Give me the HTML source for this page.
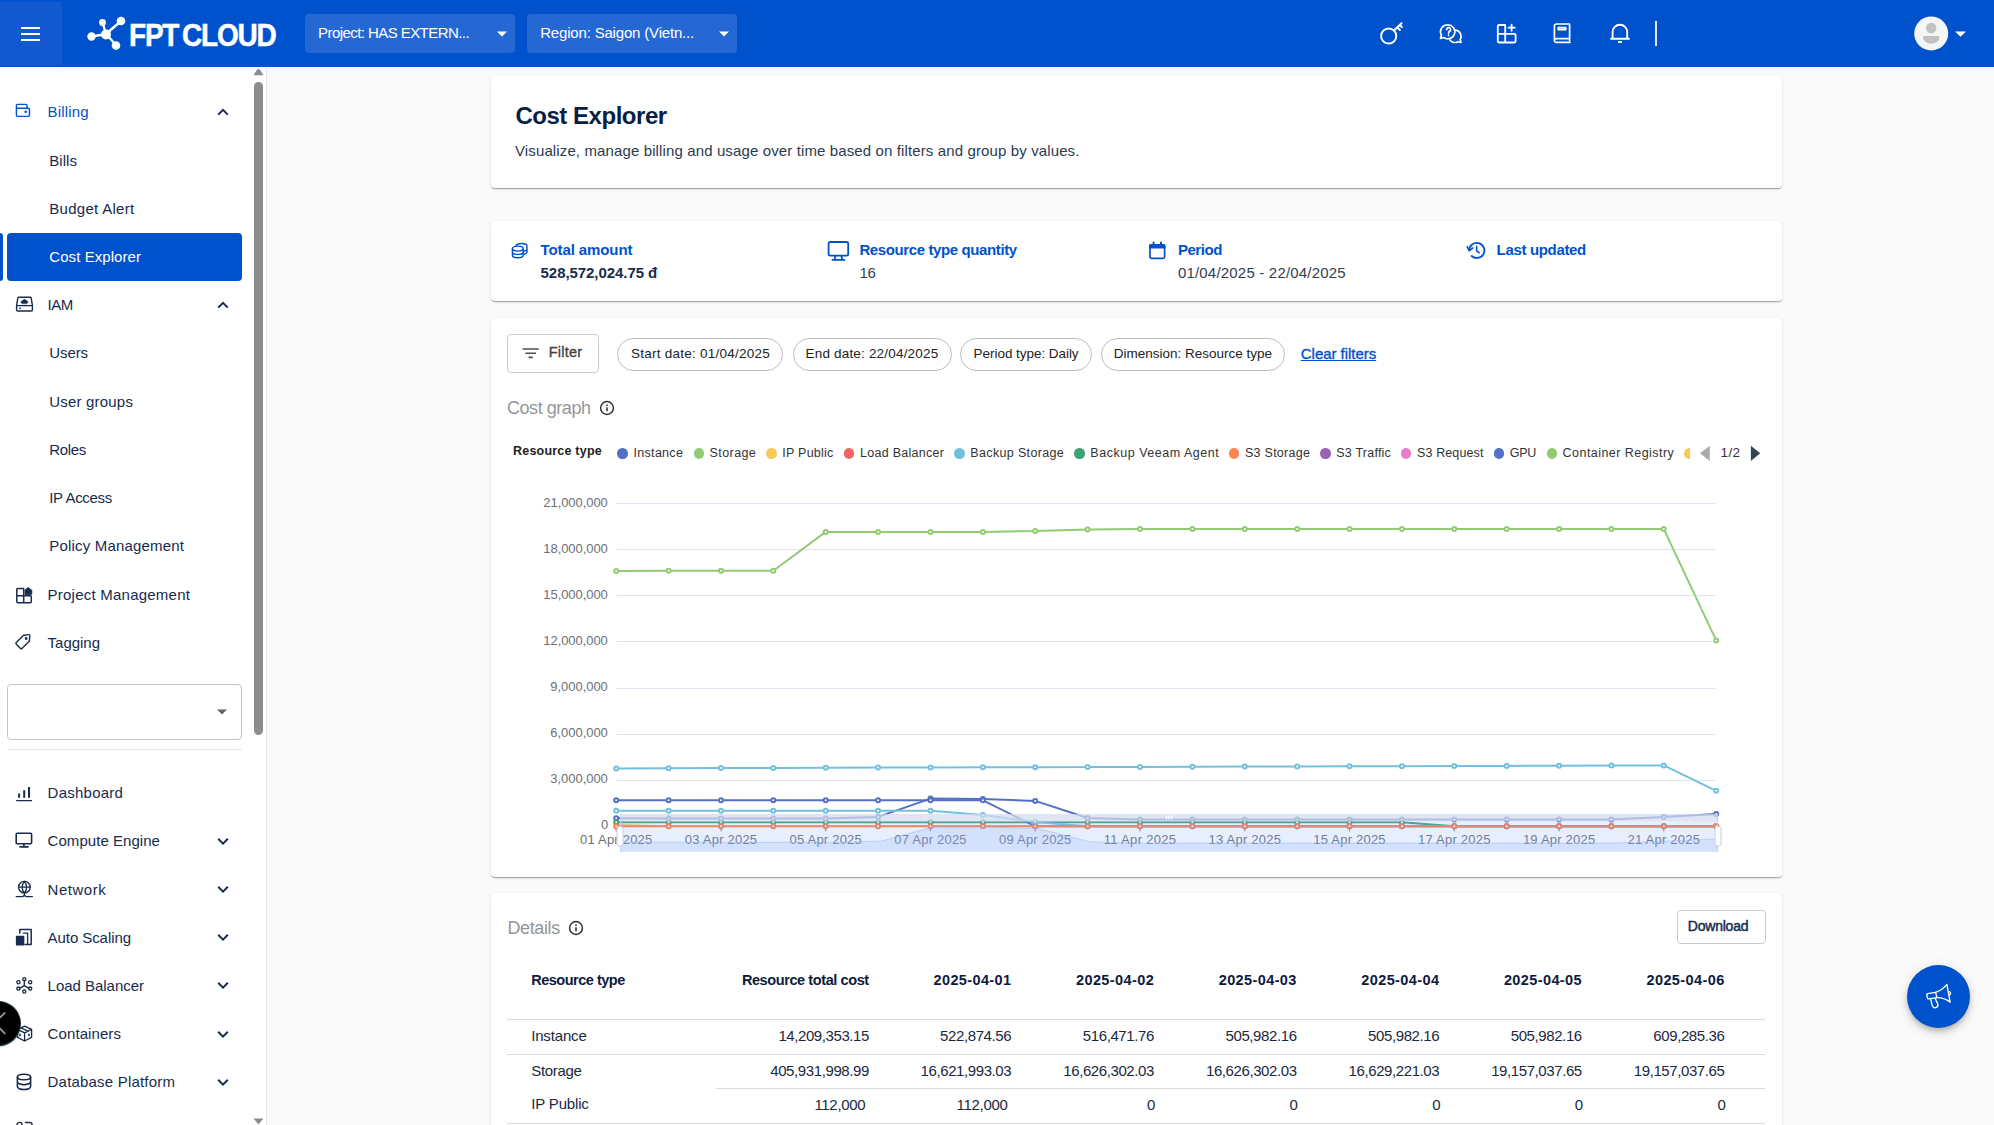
<!DOCTYPE html>
<html lang="en"><head><meta charset="utf-8"><title>Cost Explorer - FPT Cloud</title>
<style>
*{box-sizing:border-box;margin:0;padding:0}
html,body{width:1994px;height:1125px;overflow:hidden;background:#fafafa}
body{position:relative;font-family:"Liberation Sans",sans-serif}
.hdr{position:absolute;left:0;top:0;width:1994px;height:67px;background:#0052cc}
.t{position:absolute;white-space:nowrap;line-height:1;}
svg{overflow:visible}
</style></head>
<body>
<div style="position:absolute;left:491px;top:76px;width:1291px;height:112px;background:#fff;border-radius:4px;box-shadow:0 2px 1px -1px rgba(0,0,0,.2),0 1px 1px 0 rgba(0,0,0,.14),0 1px 3px 0 rgba(0,0,0,.12);"></div>
<span id="t0" class="t" style="left:515.4px;top:104px;font-size:24px;color:#091e42;font-weight:700;letter-spacing:-0.470px;">Cost Explorer</span>
<span id="t1" class="t" style="left:515.0px;top:143px;font-size:15px;color:#2c3a52;letter-spacing:0.124px;">Visualize, manage billing and usage over time based on filters and group by values.</span>
<div style="position:absolute;left:491px;top:221px;width:1291px;height:80px;background:#fff;border-radius:4px;box-shadow:0 2px 1px -1px rgba(0,0,0,.2),0 1px 1px 0 rgba(0,0,0,.14),0 1px 3px 0 rgba(0,0,0,.12);"></div>
<span id="t2" class="t" style="left:540.6px;top:242px;font-size:15px;color:#0052cc;font-weight:700;letter-spacing:-0.108px;">Total amount</span>
<span id="t3" class="t" style="left:540.6px;top:265px;font-size:15px;color:#172b4d;font-weight:700;letter-spacing:-0.065px;">528,572,024.75 đ</span>
<span id="t4" class="t" style="left:859.4px;top:242px;font-size:15px;color:#0052cc;font-weight:700;letter-spacing:-0.385px;">Resource type quantity</span>
<span id="t5" class="t" style="left:859.4px;top:265px;font-size:15px;color:#333d4f;letter-spacing:-0.192px;">16</span>
<span id="t6" class="t" style="left:1177.9px;top:242px;font-size:15px;color:#0052cc;font-weight:700;letter-spacing:-0.452px;">Period</span>
<span id="t7" class="t" style="left:1177.9px;top:265px;font-size:15px;color:#333d4f;letter-spacing:0.196px;">01/04/2025 - 22/04/2025</span>
<span id="t8" class="t" style="left:1496.6px;top:242px;font-size:15px;color:#0052cc;font-weight:700;letter-spacing:-0.334px;">Last updated</span>
<svg style="position:absolute;left:510px;top:241px" width="20" height="19" viewBox="0 0 20 19" fill="none" stroke="#0052cc" stroke-width="1.4" stroke-linecap="round" stroke-linejoin="round"><ellipse cx="7.8" cy="7.6" rx="5.4" ry="2.5"/><path d="M2.4 7.6v6.6c0 1.4 2.4 2.5 5.4 2.5s5.4-1.1 5.4-2.5V7.6M2.4 10.9c0 1.4 2.4 2.5 5.4 2.5s5.4-1.1 5.4-2.5M6 4.6c0.4-1.2 2.6-2.1 5.6-2.1 3 0 5.4 1.1 5.4 2.5v6c0 1-1.4 1.9-3.4 2.3M17 8c0 1-1.4 1.9-3.4 2.3"/></svg>
<svg style="position:absolute;left:826px;top:239px" width="25" height="24" viewBox="0 0 25 24" fill="none" stroke="#0052cc" stroke-width="1.8" stroke-linecap="round" stroke-linejoin="round"><rect x="2.6" y="3" width="19.6" height="13.6" rx="1.6"/><path d="M9.4 16.8l-0.8 3.6M15.4 16.8l0.8 3.6M6.4 20.8h12"/></svg>
<svg style="position:absolute;left:1147px;top:240px" width="21" height="21" viewBox="0 0 21 21" fill="none" stroke="#0052cc" stroke-width="1.7" stroke-linecap="round" stroke-linejoin="round"><rect x="3" y="4.8" width="14.6" height="13.6" rx="1.6"/><path d="M3 5.2h14.6v2.4H3z" fill="#0052cc"/><path d="M6.6 2.4v3M14 2.4v3" stroke-width="2"/></svg>
<svg style="position:absolute;left:1465px;top:239px" width="23" height="23" viewBox="0 0 23 23" fill="none" stroke="#0052cc" stroke-width="1.8" stroke-linecap="round" stroke-linejoin="round"><path d="M4.2 11.4a7.6 7.6 0 1 1 2.4 5.6"/><path d="M2.2 7.6l2 4 3.6-2.6" stroke-width="1.6"/><path d="M11.6 7.4v4.2l2.6 2.2" stroke-width="1.6"/></svg>
<div style="position:absolute;left:491px;top:318px;width:1291px;height:559px;background:#fff;border-radius:4px;box-shadow:0 2px 1px -1px rgba(0,0,0,.2),0 1px 1px 0 rgba(0,0,0,.14),0 1px 3px 0 rgba(0,0,0,.12);"></div>
<div style="position:absolute;left:507px;top:334px;width:91.5px;height:39px;border:1px solid #cbcbcb;border-radius:4px"></div>
<svg style="position:absolute;left:521px;top:346px" width="19" height="14" fill="none" stroke="#505050" stroke-width="1.6"><path d="M1.6 3h16.2M4.3 7.3h10.8M7.6 11.4h4.2"/></svg>
<span id="t9" class="t" style="left:548.8px;top:345px;font-size:14.5px;color:#444;letter-spacing:0.212px;-webkit-text-stroke:0.35px #444;">Filter</span>
<div style="position:absolute;left:617px;top:337.5px;width:166px;height:33px;border:1px solid #bdbdbd;border-radius:17px"></div>
<span id="t10" class="t" style="left:631.0px;top:347px;font-size:13.5px;color:#222;letter-spacing:0.246px;">Start date: 01/04/2025</span>
<div style="position:absolute;left:792.5px;top:337.5px;width:159.29999999999995px;height:33px;border:1px solid #bdbdbd;border-radius:17px"></div>
<span id="t11" class="t" style="left:805.5px;top:347px;font-size:13.5px;color:#222;letter-spacing:0.188px;">End date: 22/04/2025</span>
<div style="position:absolute;left:960px;top:337.5px;width:132px;height:33px;border:1px solid #bdbdbd;border-radius:17px"></div>
<span id="t12" class="t" style="left:973.6px;top:347px;font-size:13.5px;color:#222;letter-spacing:-0.046px;">Period type: Daily</span>
<div style="position:absolute;left:1100.5px;top:337.5px;width:184.5px;height:33px;border:1px solid #bdbdbd;border-radius:17px"></div>
<span id="t13" class="t" style="left:1113.7px;top:347px;font-size:13.5px;color:#222;letter-spacing:-0.005px;">Dimension: Resource type</span>
<span id="t14" class="t" style="left:1300.8px;top:346px;font-size:15px;color:#0052cc;letter-spacing:-0.037px;text-decoration:underline;-webkit-text-stroke:0.35px #0052cc;">Clear filters</span>
<span id="t15" class="t" style="left:507.0px;top:399px;font-size:18px;color:#969696;letter-spacing:-0.449px;">Cost graph</span>
<svg style="position:absolute;left:598.9px;top:400px" width="16" height="16" viewBox="0 0 16 16" fill="none" stroke="#333" stroke-width="1.5"><circle cx="8" cy="8" r="6.4"/><path d="M8 7.2v4" stroke-width="1.6"/><path d="M8 4.6v1.5" stroke-width="1.6"/></svg>
<span id="t16" class="t" style="left:513.0px;top:445px;font-size:12.5px;color:#222;font-weight:700;letter-spacing:0.211px;">Resource type</span>
<div style="position:absolute;left:617.4px;top:448.3px;width:10.4px;height:10.4px;border-radius:50%;background:#5470c6"></div>
<span id="t17" class="t" style="left:633.6px;top:447px;font-size:12.5px;color:#333;letter-spacing:0.285px;">Instance</span>
<div style="position:absolute;left:693.6px;top:448.3px;width:10.4px;height:10.4px;border-radius:50%;background:#91cc75"></div>
<span id="t18" class="t" style="left:709.6px;top:447px;font-size:12.5px;color:#333;letter-spacing:0.403px;">Storage</span>
<div style="position:absolute;left:766.3px;top:448.3px;width:10.4px;height:10.4px;border-radius:50%;background:#fac858"></div>
<span id="t19" class="t" style="left:782.3px;top:447px;font-size:12.5px;color:#333;letter-spacing:0.246px;">IP Public</span>
<div style="position:absolute;left:843.8px;top:448.3px;width:10.4px;height:10.4px;border-radius:50%;background:#ee6666"></div>
<span id="t20" class="t" style="left:860.0px;top:447px;font-size:12.5px;color:#333;letter-spacing:0.270px;">Load Balancer</span>
<div style="position:absolute;left:954.4px;top:448.3px;width:10.4px;height:10.4px;border-radius:50%;background:#73c0de"></div>
<span id="t21" class="t" style="left:970.3px;top:447px;font-size:12.5px;color:#333;letter-spacing:0.352px;">Backup Storage</span>
<div style="position:absolute;left:1074.4px;top:448.3px;width:10.4px;height:10.4px;border-radius:50%;background:#3ba272"></div>
<span id="t22" class="t" style="left:1090.3px;top:447px;font-size:12.5px;color:#333;letter-spacing:0.524px;">Backup Veeam Agent</span>
<div style="position:absolute;left:1229.1px;top:448.3px;width:10.4px;height:10.4px;border-radius:50%;background:#fc8452"></div>
<span id="t23" class="t" style="left:1245.0px;top:447px;font-size:12.5px;color:#333;letter-spacing:0.258px;">S3 Storage</span>
<div style="position:absolute;left:1320.3px;top:448.3px;width:10.4px;height:10.4px;border-radius:50%;background:#9a60b4"></div>
<span id="t24" class="t" style="left:1336.2px;top:447px;font-size:12.5px;color:#333;letter-spacing:0.234px;">S3 Traffic</span>
<div style="position:absolute;left:1400.8px;top:448.3px;width:10.4px;height:10.4px;border-radius:50%;background:#ea7ccc"></div>
<span id="t25" class="t" style="left:1417.0px;top:447px;font-size:12.5px;color:#333;letter-spacing:0.123px;">S3 Request</span>
<div style="position:absolute;left:1493.8px;top:448.3px;width:10.4px;height:10.4px;border-radius:50%;background:#5470c6"></div>
<span id="t26" class="t" style="left:1509.8px;top:447px;font-size:12.5px;color:#333;letter-spacing:-0.358px;">GPU</span>
<div style="position:absolute;left:1546.8px;top:448.3px;width:10.4px;height:10.4px;border-radius:50%;background:#91cc75"></div>
<span id="t27" class="t" style="left:1562.6px;top:447px;font-size:12.5px;color:#333;letter-spacing:0.451px;">Container Registry</span>
<div style="position:absolute;left:1684px;top:448.2px;width:5.8px;height:10.6px;overflow:hidden"><div style="width:10.6px;height:10.6px;border-radius:50%;background:#fac858"></div></div>
<svg style="position:absolute;left:1698px;top:445px" width="64" height="17"><path d="M11.8 0.8v15.1L2 8.35z" fill="#aaa"/><path d="M52.9 0.8v15.1L62.2 8.35z" fill="#2f4554"/></svg>
<span id="t28" class="t" style="left:1720.6px;top:446px;font-size:13.5px;color:#333;letter-spacing:0.287px;">1/2</span>
<svg style="position:absolute;left:0;top:0" width="1994" height="1125" viewBox="0 0 1994 1125">
<line x1="616.2" x2="1716.2" y1="826.5" y2="826.5" stroke="#e0e6f1" stroke-width="1"/>
<line x1="616.2" x2="1716.2" y1="780.5" y2="780.5" stroke="#e0e6f1" stroke-width="1"/>
<line x1="616.2" x2="1716.2" y1="734.5" y2="734.5" stroke="#e0e6f1" stroke-width="1"/>
<line x1="616.2" x2="1716.2" y1="688.5" y2="688.5" stroke="#e0e6f1" stroke-width="1"/>
<line x1="616.2" x2="1716.2" y1="641.5" y2="641.5" stroke="#e0e6f1" stroke-width="1"/>
<line x1="616.2" x2="1716.2" y1="595.5" y2="595.5" stroke="#e0e6f1" stroke-width="1"/>
<line x1="616.2" x2="1716.2" y1="549.5" y2="549.5" stroke="#e0e6f1" stroke-width="1"/>
<line x1="616.2" x2="1716.2" y1="503.5" y2="503.5" stroke="#e0e6f1" stroke-width="1"/>
<line x1="616.2" x2="616.2" y1="826.3" y2="831.3" stroke="#6e7079" stroke-width="1"/>
<line x1="721.0" x2="721.0" y1="826.3" y2="831.3" stroke="#6e7079" stroke-width="1"/>
<line x1="825.7" x2="825.7" y1="826.3" y2="831.3" stroke="#6e7079" stroke-width="1"/>
<line x1="930.5" x2="930.5" y1="826.3" y2="831.3" stroke="#6e7079" stroke-width="1"/>
<line x1="1035.2" x2="1035.2" y1="826.3" y2="831.3" stroke="#6e7079" stroke-width="1"/>
<line x1="1140.0" x2="1140.0" y1="826.3" y2="831.3" stroke="#6e7079" stroke-width="1"/>
<line x1="1244.8" x2="1244.8" y1="826.3" y2="831.3" stroke="#6e7079" stroke-width="1"/>
<line x1="1349.5" x2="1349.5" y1="826.3" y2="831.3" stroke="#6e7079" stroke-width="1"/>
<line x1="1454.3" x2="1454.3" y1="826.3" y2="831.3" stroke="#6e7079" stroke-width="1"/>
<line x1="1559.1" x2="1559.1" y1="826.3" y2="831.3" stroke="#6e7079" stroke-width="1"/>
<line x1="1663.8" x2="1663.8" y1="826.3" y2="831.3" stroke="#6e7079" stroke-width="1"/>
<polyline points="616.2,818.3 668.6,818.4 721.0,818.5 773.3,818.5 825.7,818.5 878.1,816.9 930.5,798.6 982.9,798.9 1035.2,800.9 1087.6,818.0 1140.0,819.5 1192.4,819.5 1244.8,819.5 1297.2,819.5 1349.5,819.5 1401.9,819.5 1454.3,819.5 1506.7,819.5 1559.1,819.5 1611.4,819.5 1663.8,817.1 1716.2,814.0" fill="none" stroke="#5470c6" stroke-width="2" stroke-linejoin="bevel"/><g fill="#fff" stroke="#5470c6" stroke-width="2"><circle cx="616.2" cy="818.3" r="2"/><circle cx="668.6" cy="818.4" r="2"/><circle cx="721.0" cy="818.5" r="2"/><circle cx="773.3" cy="818.5" r="2"/><circle cx="825.7" cy="818.5" r="2"/><circle cx="878.1" cy="816.9" r="2"/><circle cx="930.5" cy="798.6" r="2"/><circle cx="982.9" cy="798.9" r="2"/><circle cx="1035.2" cy="800.9" r="2"/><circle cx="1087.6" cy="818.0" r="2"/><circle cx="1140.0" cy="819.5" r="2"/><circle cx="1192.4" cy="819.5" r="2"/><circle cx="1244.8" cy="819.5" r="2"/><circle cx="1297.2" cy="819.5" r="2"/><circle cx="1349.5" cy="819.5" r="2"/><circle cx="1401.9" cy="819.5" r="2"/><circle cx="1454.3" cy="819.5" r="2"/><circle cx="1506.7" cy="819.5" r="2"/><circle cx="1559.1" cy="819.5" r="2"/><circle cx="1611.4" cy="819.5" r="2"/><circle cx="1663.8" cy="817.1" r="2"/><circle cx="1716.2" cy="814.0" r="2"/></g>
<polyline points="616.2,570.9 668.6,570.8 721.0,570.8 773.3,570.8 825.7,531.9 878.1,531.9 930.5,531.9 982.9,531.9 1035.2,531.0 1087.6,529.4 1140.0,529.1 1192.4,529.1 1244.8,529.1 1297.2,529.1 1349.5,529.1 1401.9,529.1 1454.3,529.1 1506.7,529.1 1559.1,529.1 1611.4,529.1 1663.8,529.1 1716.2,640.4" fill="none" stroke="#91cc75" stroke-width="2" stroke-linejoin="bevel"/><g fill="#fff" stroke="#91cc75" stroke-width="2"><circle cx="616.2" cy="570.9" r="2"/><circle cx="668.6" cy="570.8" r="2"/><circle cx="721.0" cy="570.8" r="2"/><circle cx="773.3" cy="570.8" r="2"/><circle cx="825.7" cy="531.9" r="2"/><circle cx="878.1" cy="531.9" r="2"/><circle cx="930.5" cy="531.9" r="2"/><circle cx="982.9" cy="531.9" r="2"/><circle cx="1035.2" cy="531.0" r="2"/><circle cx="1087.6" cy="529.4" r="2"/><circle cx="1140.0" cy="529.1" r="2"/><circle cx="1192.4" cy="529.1" r="2"/><circle cx="1244.8" cy="529.1" r="2"/><circle cx="1297.2" cy="529.1" r="2"/><circle cx="1349.5" cy="529.1" r="2"/><circle cx="1401.9" cy="529.1" r="2"/><circle cx="1454.3" cy="529.1" r="2"/><circle cx="1506.7" cy="529.1" r="2"/><circle cx="1559.1" cy="529.1" r="2"/><circle cx="1611.4" cy="529.1" r="2"/><circle cx="1663.8" cy="529.1" r="2"/><circle cx="1716.2" cy="640.4" r="2"/></g>
<polyline points="616.2,824.6 668.6,826.3 721.0,826.3 773.3,826.3 825.7,826.3 878.1,826.3 930.5,826.3 982.9,826.3 1035.2,826.3 1087.6,826.3 1140.0,826.3 1192.4,826.3 1244.8,826.3 1297.2,826.3 1349.5,826.3 1401.9,826.3 1454.3,826.3 1506.7,826.3 1559.1,826.3 1611.4,826.3 1663.8,826.3 1716.2,826.3" fill="none" stroke="#fac858" stroke-width="1.5" stroke-linejoin="bevel"/>
<polyline points="616.2,768.4 668.6,768.2 721.0,768.1 773.3,767.9 825.7,767.8 878.1,767.6 930.5,767.5 982.9,767.3 1035.2,767.2 1087.6,767.1 1140.0,766.9 1192.4,766.8 1244.8,766.6 1297.2,766.5 1349.5,766.3 1401.9,766.2 1454.3,766.0 1506.7,765.9 1559.1,765.7 1611.4,765.6 1663.8,765.4 1716.2,790.8" fill="none" stroke="#73c0de" stroke-width="2" stroke-linejoin="bevel"/><g fill="#fff" stroke="#73c0de" stroke-width="2"><circle cx="616.2" cy="768.4" r="2"/><circle cx="668.6" cy="768.2" r="2"/><circle cx="721.0" cy="768.1" r="2"/><circle cx="773.3" cy="767.9" r="2"/><circle cx="825.7" cy="767.8" r="2"/><circle cx="878.1" cy="767.6" r="2"/><circle cx="930.5" cy="767.5" r="2"/><circle cx="982.9" cy="767.3" r="2"/><circle cx="1035.2" cy="767.2" r="2"/><circle cx="1087.6" cy="767.1" r="2"/><circle cx="1140.0" cy="766.9" r="2"/><circle cx="1192.4" cy="766.8" r="2"/><circle cx="1244.8" cy="766.6" r="2"/><circle cx="1297.2" cy="766.5" r="2"/><circle cx="1349.5" cy="766.3" r="2"/><circle cx="1401.9" cy="766.2" r="2"/><circle cx="1454.3" cy="766.0" r="2"/><circle cx="1506.7" cy="765.9" r="2"/><circle cx="1559.1" cy="765.7" r="2"/><circle cx="1611.4" cy="765.6" r="2"/><circle cx="1663.8" cy="765.4" r="2"/><circle cx="1716.2" cy="790.8" r="2"/></g>
<polyline points="616.2,822.2 668.6,822.2 721.0,822.2 773.3,822.2 825.7,822.2 878.1,822.2 930.5,822.2 982.9,822.2 1035.2,822.2 1087.6,822.2 1140.0,822.2 1192.4,822.2 1244.8,822.2 1297.2,822.2 1349.5,822.2 1401.9,822.2 1454.3,826.3 1506.7,826.3 1559.1,826.3 1611.4,826.3 1663.8,826.3 1716.2,826.3" fill="none" stroke="#3ba272" stroke-width="2" stroke-linejoin="bevel"/><g fill="#fff" stroke="#3ba272" stroke-width="2"><circle cx="616.2" cy="822.2" r="2"/><circle cx="668.6" cy="822.2" r="2"/><circle cx="721.0" cy="822.2" r="2"/><circle cx="773.3" cy="822.2" r="2"/><circle cx="825.7" cy="822.2" r="2"/><circle cx="878.1" cy="822.2" r="2"/><circle cx="930.5" cy="822.2" r="2"/><circle cx="982.9" cy="822.2" r="2"/><circle cx="1035.2" cy="822.2" r="2"/><circle cx="1087.6" cy="822.2" r="2"/><circle cx="1140.0" cy="822.2" r="2"/><circle cx="1192.4" cy="822.2" r="2"/><circle cx="1244.8" cy="822.2" r="2"/><circle cx="1297.2" cy="822.2" r="2"/><circle cx="1349.5" cy="822.2" r="2"/><circle cx="1401.9" cy="822.2" r="2"/><circle cx="1454.3" cy="826.3" r="2"/><circle cx="1506.7" cy="826.3" r="2"/><circle cx="1559.1" cy="826.3" r="2"/><circle cx="1611.4" cy="826.3" r="2"/><circle cx="1663.8" cy="826.3" r="2"/><circle cx="1716.2" cy="826.3" r="2"/></g>
<polyline points="616.2,800.3 668.6,800.3 721.0,800.3 773.3,800.3 825.7,800.3 878.1,800.3 930.5,800.3 982.9,800.3 1035.2,826.3 1087.6,826.3 1140.0,826.3 1192.4,826.3 1244.8,826.3 1297.2,826.3 1349.5,826.3 1401.9,826.3 1454.3,826.3 1506.7,826.3 1559.1,826.3 1611.4,826.3 1663.8,826.3 1716.2,826.3" fill="none" stroke="#5470c6" stroke-width="2" stroke-linejoin="bevel"/><g fill="#fff" stroke="#5470c6" stroke-width="2"><circle cx="616.2" cy="800.3" r="2"/><circle cx="668.6" cy="800.3" r="2"/><circle cx="721.0" cy="800.3" r="2"/><circle cx="773.3" cy="800.3" r="2"/><circle cx="825.7" cy="800.3" r="2"/><circle cx="878.1" cy="800.3" r="2"/><circle cx="930.5" cy="800.3" r="2"/><circle cx="982.9" cy="800.3" r="2"/><circle cx="1035.2" cy="826.3" r="2"/><circle cx="1087.6" cy="826.3" r="2"/><circle cx="1140.0" cy="826.3" r="2"/><circle cx="1192.4" cy="826.3" r="2"/><circle cx="1244.8" cy="826.3" r="2"/><circle cx="1297.2" cy="826.3" r="2"/><circle cx="1349.5" cy="826.3" r="2"/><circle cx="1401.9" cy="826.3" r="2"/><circle cx="1454.3" cy="826.3" r="2"/><circle cx="1506.7" cy="826.3" r="2"/><circle cx="1559.1" cy="826.3" r="2"/><circle cx="1611.4" cy="826.3" r="2"/><circle cx="1663.8" cy="826.3" r="2"/><circle cx="1716.2" cy="826.3" r="2"/></g>
<polyline points="616.2,810.7 668.6,810.7 721.0,810.7 773.3,810.7 825.7,810.7 878.1,810.7 930.5,810.7 982.9,815.0 1035.2,822.0 1087.6,826.3 1140.0,826.3 1192.4,826.3 1244.8,826.3 1297.2,826.3 1349.5,826.3 1401.9,826.3 1454.3,826.3 1506.7,826.3 1559.1,826.3 1611.4,826.3 1663.8,826.3 1716.2,826.3" fill="none" stroke="#73c0de" stroke-width="2" stroke-linejoin="bevel"/><g fill="#fff" stroke="#73c0de" stroke-width="2"><circle cx="616.2" cy="810.7" r="2"/><circle cx="668.6" cy="810.7" r="2"/><circle cx="721.0" cy="810.7" r="2"/><circle cx="773.3" cy="810.7" r="2"/><circle cx="825.7" cy="810.7" r="2"/><circle cx="878.1" cy="810.7" r="2"/><circle cx="930.5" cy="810.7" r="2"/><circle cx="982.9" cy="815.0" r="2"/><circle cx="1035.2" cy="822.0" r="2"/><circle cx="1087.6" cy="826.3" r="2"/><circle cx="1140.0" cy="826.3" r="2"/><circle cx="1192.4" cy="826.3" r="2"/><circle cx="1244.8" cy="826.3" r="2"/><circle cx="1297.2" cy="826.3" r="2"/><circle cx="1349.5" cy="826.3" r="2"/><circle cx="1401.9" cy="826.3" r="2"/><circle cx="1454.3" cy="826.3" r="2"/><circle cx="1506.7" cy="826.3" r="2"/><circle cx="1559.1" cy="826.3" r="2"/><circle cx="1611.4" cy="826.3" r="2"/><circle cx="1663.8" cy="826.3" r="2"/><circle cx="1716.2" cy="826.3" r="2"/></g>
<polyline points="616.2,826.3 668.6,826.3 721.0,826.3 773.3,826.3 825.7,826.3 878.1,826.3 930.5,826.3 982.9,826.3 1035.2,826.3 1087.6,826.3 1140.0,826.3 1192.4,826.3 1244.8,826.3 1297.2,826.3 1349.5,826.3 1401.9,826.3 1454.3,826.3 1506.7,826.3 1559.1,826.3 1611.4,826.3 1663.8,826.3 1716.2,826.3" fill="none" stroke="#fc7c46" stroke-width="2" stroke-linejoin="bevel"/><g fill="#fff" stroke="#fc7c46" stroke-width="2"><circle cx="616.2" cy="826.3" r="2"/><circle cx="668.6" cy="826.3" r="2"/><circle cx="721.0" cy="826.3" r="2"/><circle cx="773.3" cy="826.3" r="2"/><circle cx="825.7" cy="826.3" r="2"/><circle cx="878.1" cy="826.3" r="2"/><circle cx="930.5" cy="826.3" r="2"/><circle cx="982.9" cy="826.3" r="2"/><circle cx="1035.2" cy="826.3" r="2"/><circle cx="1087.6" cy="826.3" r="2"/><circle cx="1140.0" cy="826.3" r="2"/><circle cx="1192.4" cy="826.3" r="2"/><circle cx="1244.8" cy="826.3" r="2"/><circle cx="1297.2" cy="826.3" r="2"/><circle cx="1349.5" cy="826.3" r="2"/><circle cx="1401.9" cy="826.3" r="2"/><circle cx="1454.3" cy="826.3" r="2"/><circle cx="1506.7" cy="826.3" r="2"/><circle cx="1559.1" cy="826.3" r="2"/><circle cx="1611.4" cy="826.3" r="2"/><circle cx="1663.8" cy="826.3" r="2"/><circle cx="1716.2" cy="826.3" r="2"/></g>
</svg>
<span id="t29" class="t" style="left:600.9px;top:818px;font-size:13px;color:#6e7079;">0</span>
<span id="t30" class="t" style="left:550.3px;top:772px;font-size:13px;color:#6e7079;letter-spacing:-0.040px;">3,000,000</span>
<span id="t31" class="t" style="left:550.3px;top:726px;font-size:13px;color:#6e7079;letter-spacing:-0.040px;">6,000,000</span>
<span id="t32" class="t" style="left:550.3px;top:680px;font-size:13px;color:#6e7079;letter-spacing:-0.040px;">9,000,000</span>
<span id="t33" class="t" style="left:543.3px;top:634px;font-size:13px;color:#6e7079;letter-spacing:-0.061px;">12,000,000</span>
<span id="t34" class="t" style="left:543.3px;top:588px;font-size:13px;color:#6e7079;letter-spacing:-0.061px;">15,000,000</span>
<span id="t35" class="t" style="left:543.3px;top:542px;font-size:13px;color:#6e7079;letter-spacing:-0.061px;">18,000,000</span>
<span id="t36" class="t" style="left:543.3px;top:496px;font-size:13px;color:#6e7079;letter-spacing:-0.061px;">21,000,000</span>
<span id="t37" class="t" style="left:580.0px;top:833px;font-size:13px;color:#6e7079;letter-spacing:0.217px;">01 Apr 2025</span>
<span id="t38" class="t" style="left:684.8px;top:833px;font-size:13px;color:#6e7079;letter-spacing:0.217px;">03 Apr 2025</span>
<span id="t39" class="t" style="left:789.5px;top:833px;font-size:13px;color:#6e7079;letter-spacing:0.217px;">05 Apr 2025</span>
<span id="t40" class="t" style="left:894.3px;top:833px;font-size:13px;color:#6e7079;letter-spacing:0.217px;">07 Apr 2025</span>
<span id="t41" class="t" style="left:999.0px;top:833px;font-size:13px;color:#6e7079;letter-spacing:0.217px;">09 Apr 2025</span>
<span id="t42" class="t" style="left:1103.8px;top:833px;font-size:13px;color:#6e7079;letter-spacing:0.309px;">11 Apr 2025</span>
<span id="t43" class="t" style="left:1208.6px;top:833px;font-size:13px;color:#6e7079;letter-spacing:0.217px;">13 Apr 2025</span>
<span id="t44" class="t" style="left:1313.3px;top:833px;font-size:13px;color:#6e7079;letter-spacing:0.217px;">15 Apr 2025</span>
<span id="t45" class="t" style="left:1418.1px;top:833px;font-size:13px;color:#6e7079;letter-spacing:0.217px;">17 Apr 2025</span>
<span id="t46" class="t" style="left:1522.9px;top:833px;font-size:13px;color:#6e7079;letter-spacing:0.217px;">19 Apr 2025</span>
<span id="t47" class="t" style="left:1627.6px;top:833px;font-size:13px;color:#6e7079;letter-spacing:0.217px;">21 Apr 2025</span>
<svg style="position:absolute;left:0;top:0" width="1994" height="1125" viewBox="0 0 1994 1125">
<rect x="620" y="814" width="1098" height="7.5" fill="#d2dbee" fill-opacity="0.72"/>
<rect x="620" y="821.5" width="1098" height="30.3" fill="#87afff" fill-opacity="0.2"/>
<polygon points="620,851.8 620.0,842.1 672.3,842.2 724.6,842.3 776.9,842.3 829.1,842.3 881.4,841.1 933.7,826.8 986.0,827.0 1038.3,828.6 1090.6,841.9 1142.9,843.1 1195.1,843.1 1247.4,843.1 1299.7,843.1 1352.0,843.1 1404.3,843.1 1456.6,843.1 1508.9,843.1 1561.1,843.1 1613.4,843.1 1665.7,841.2 1718.0,838.8 1718,851.8" fill="#8fb0f7" fill-opacity="0.22"/>
<polyline points="620.0,842.1 672.3,842.2 724.6,842.3 776.9,842.3 829.1,842.3 881.4,841.1 933.7,826.8 986.0,827.0 1038.3,828.6 1090.6,841.9 1142.9,843.1 1195.1,843.1 1247.4,843.1 1299.7,843.1 1352.0,843.1 1404.3,843.1 1456.6,843.1 1508.9,843.1 1561.1,843.1 1613.4,843.1 1665.7,841.2 1718.0,838.8" fill="none" stroke="#8fb0f7" stroke-opacity="0.45" stroke-width="1"/>
<path d="M620.5 814v37.8M1717.5 814v37.8" stroke="#c3cfee" stroke-width="1" fill="none"/>
<path d="M1166.5 815.5v4M1169 815.5v4M1171.5 815.5v4" stroke="#fff" stroke-width="1.2"/>
<rect x="617" y="826.5" width="6" height="19.5" rx="2" fill="#fff" stroke="#c3cce0" stroke-width="1"/>
<rect x="1715" y="826.5" width="6" height="19.5" rx="2" fill="#fff" stroke="#c3cce0" stroke-width="1"/>
</svg>
<div style="position:absolute;left:491px;top:893px;width:1291px;height:260px;background:#fff;border-radius:4px;box-shadow:0 2px 1px -1px rgba(0,0,0,.2),0 1px 1px 0 rgba(0,0,0,.14),0 1px 3px 0 rgba(0,0,0,.12);"></div>
<span id="t48" class="t" style="left:507.4px;top:919px;font-size:18px;color:#969696;letter-spacing:-0.374px;">Details</span>
<svg style="position:absolute;left:567.5px;top:920.1px" width="16" height="16" viewBox="0 0 16 16" fill="none" stroke="#333" stroke-width="1.5"><circle cx="8" cy="8" r="6.4"/><path d="M8 7.2v4" stroke-width="1.6"/><path d="M8 4.6v1.5" stroke-width="1.6"/></svg>
<div style="position:absolute;left:1677px;top:910px;width:88.5px;height:33.5px;border:1px solid #cbcbcb;border-radius:4px"></div>
<span id="t49" class="t" style="left:1687.8px;top:919px;font-size:14px;color:#172b4d;letter-spacing:-0.222px;-webkit-text-stroke:0.45px #172b4d;">Download</span>
<span id="t50" class="t" style="left:531.2px;top:973px;font-size:14.5px;color:#0d1b3d;font-weight:700;letter-spacing:-0.491px;">Resource type</span>
<span id="t51" class="t" style="left:741.9px;top:973px;font-size:14.5px;color:#0d1b3d;font-weight:700;letter-spacing:-0.404px;">Resource total cost</span>
<span id="t52" class="t" style="left:933.6px;top:973px;font-size:14.5px;color:#0d1b3d;font-weight:700;letter-spacing:0.361px;">2025-04-01</span>
<span id="t53" class="t" style="left:1076.0px;top:973px;font-size:14.5px;color:#0d1b3d;font-weight:700;letter-spacing:0.392px;">2025-04-02</span>
<span id="t54" class="t" style="left:1218.7px;top:973px;font-size:14.5px;color:#0d1b3d;font-weight:700;letter-spacing:0.392px;">2025-04-03</span>
<span id="t55" class="t" style="left:1361.3px;top:973px;font-size:14.5px;color:#0d1b3d;font-weight:700;letter-spacing:0.392px;">2025-04-04</span>
<span id="t56" class="t" style="left:1503.9px;top:973px;font-size:14.5px;color:#0d1b3d;font-weight:700;letter-spacing:0.392px;">2025-04-05</span>
<span id="t57" class="t" style="left:1646.5px;top:973px;font-size:14.5px;color:#0d1b3d;font-weight:700;letter-spacing:0.392px;">2025-04-06</span>
<div style="position:absolute;left:507px;top:1019px;width:1258px;height:1px;background:#dcdcdc"></div>
<div style="position:absolute;left:507px;top:1054px;width:1258px;height:1px;background:#dcdcdc"></div>
<div style="position:absolute;left:716px;top:1088px;width:1049px;height:1px;background:#dcdcdc"></div>
<div style="position:absolute;left:507px;top:1123px;width:1258px;height:1px;background:#dcdcdc"></div>
<span id="t58" class="t" style="left:531.2px;top:1028px;font-size:15px;color:#1b2840;letter-spacing:-0.163px;">Instance</span>
<span id="t59" class="t" style="left:778.4px;top:1028px;font-size:15px;color:#1b2840;letter-spacing:-0.411px;">14,209,353.15</span>
<span id="t60" class="t" style="left:940.1px;top:1028px;font-size:15px;color:#1b2840;letter-spacing:-0.398px;">522,874.56</span>
<span id="t61" class="t" style="left:1082.8px;top:1028px;font-size:15px;color:#1b2840;letter-spacing:-0.398px;">516,471.76</span>
<span id="t62" class="t" style="left:1225.5px;top:1028px;font-size:15px;color:#1b2840;letter-spacing:-0.398px;">505,982.16</span>
<span id="t63" class="t" style="left:1368.1px;top:1028px;font-size:15px;color:#1b2840;letter-spacing:-0.398px;">505,982.16</span>
<span id="t64" class="t" style="left:1510.7px;top:1028px;font-size:15px;color:#1b2840;letter-spacing:-0.398px;">505,982.16</span>
<span id="t65" class="t" style="left:1653.3px;top:1028px;font-size:15px;color:#1b2840;letter-spacing:-0.398px;">609,285.36</span>
<span id="t66" class="t" style="left:531.2px;top:1063px;font-size:15px;color:#1b2840;letter-spacing:-0.315px;">Storage</span>
<span id="t67" class="t" style="left:770.2px;top:1063px;font-size:15px;color:#1b2840;letter-spacing:-0.391px;">405,931,998.99</span>
<span id="t68" class="t" style="left:920.6px;top:1063px;font-size:15px;color:#1b2840;letter-spacing:-0.411px;">16,621,993.03</span>
<span id="t69" class="t" style="left:1063.3px;top:1063px;font-size:15px;color:#1b2840;letter-spacing:-0.411px;">16,626,302.03</span>
<span id="t70" class="t" style="left:1206.0px;top:1063px;font-size:15px;color:#1b2840;letter-spacing:-0.411px;">16,626,302.03</span>
<span id="t71" class="t" style="left:1348.6px;top:1063px;font-size:15px;color:#1b2840;letter-spacing:-0.411px;">16,629,221.03</span>
<span id="t72" class="t" style="left:1491.2px;top:1063px;font-size:15px;color:#1b2840;letter-spacing:-0.411px;">19,157,037.65</span>
<span id="t73" class="t" style="left:1633.8px;top:1063px;font-size:15px;color:#1b2840;letter-spacing:-0.411px;">19,157,037.65</span>
<span id="t74" class="t" style="left:531.2px;top:1096px;font-size:15px;color:#1b2840;letter-spacing:-0.157px;">IP Public</span>
<span id="t75" class="t" style="left:814.4px;top:1097px;font-size:15px;color:#1b2840;letter-spacing:-0.309px;">112,000</span>
<span id="t76" class="t" style="left:956.6px;top:1097px;font-size:15px;color:#1b2840;letter-spacing:-0.309px;">112,000</span>
<span id="t77" class="t" style="left:1146.9px;top:1097px;font-size:15px;color:#1b2840;">0</span>
<span id="t78" class="t" style="left:1289.6px;top:1097px;font-size:15px;color:#1b2840;">0</span>
<span id="t79" class="t" style="left:1432.2px;top:1097px;font-size:15px;color:#1b2840;">0</span>
<span id="t80" class="t" style="left:1574.8px;top:1097px;font-size:15px;color:#1b2840;">0</span>
<span id="t81" class="t" style="left:1717.4px;top:1097px;font-size:15px;color:#1b2840;">0</span>
<div style="position:absolute;left:1907px;top:964.5px;width:63px;height:63px;border-radius:50%;background:#0052cc;box-shadow:0 3px 5px -1px rgba(0,0,0,.2),0 6px 10px 0 rgba(0,0,0,.1),0 1px 14px 0 rgba(0,0,0,.08)"></div>
<svg style="position:absolute;left:1924px;top:982px" width="30" height="28" viewBox="0 0 30 28" fill="none" stroke="#fff" stroke-width="1.35" stroke-linejoin="round" stroke-linecap="round">
<path d="M3.6 11.7L11.6 10.3C16.5 8.8 20 6 22.9 2.4L26.1 20.2C22.2 17.2 18 15.6 13 15.7L4.6 16.8a1 1 0 0 1-1.1-0.8L2.8 12.8a1 1 0 0 1 0.8-1.1z"/>
<path d="M11.6 10.3L13 15.7M6.6 17.2l1.6 6.2a2.9 2.9 0 0 0 5.7-1.2L11.2 16.6M25 9.7a1.6 1.6 0 0 1 0.5 3.1"/></svg>
<div style="position:absolute;left:0;top:67px;width:266px;height:1058px;background:#fff"></div>
<div style="position:absolute;left:266px;top:67px;width:1px;height:1058px;background:#e4e4e4"></div>
<div style="position:absolute;left:254px;top:82px;width:9px;height:653px;border-radius:4.5px;background:#8c8c8c"></div>
<svg style="position:absolute;left:253px;top:67px" width="11" height="9"><path d="M0.5 8.2L4.3 2.2h2.4L10.5 8.2z" fill="#8c8c8c"/></svg>
<svg style="position:absolute;left:253px;top:1117px" width="11" height="8"><path d="M0.5 1.5L5.5 7.5 10.5 1.5z" fill="#8c8c8c"/></svg>
<div style="position:absolute;left:0;top:233px;width:3px;height:48px;background:#0052cc;border-radius:0 4px 4px 0"></div>
<div style="position:absolute;left:7px;top:233px;width:235px;height:48px;background:#0052cc;border-radius:4px"></div>
<span id="t82" class="t" style="left:47.6px;top:104px;font-size:15px;color:#0052cc;letter-spacing:0.149px;">Billing</span>
<span id="t83" class="t" style="left:47.6px;top:297px;font-size:15px;color:#172b4d;letter-spacing:-0.509px;">IAM</span>
<span id="t84" class="t" style="left:47.6px;top:587px;font-size:15px;color:#172b4d;letter-spacing:0.228px;">Project Management</span>
<span id="t85" class="t" style="left:47.6px;top:635px;font-size:15px;color:#172b4d;letter-spacing:-0.023px;">Tagging</span>
<span id="t86" class="t" style="left:47.6px;top:785px;font-size:15px;color:#172b4d;letter-spacing:0.236px;">Dashboard</span>
<span id="t87" class="t" style="left:47.6px;top:833px;font-size:15px;color:#172b4d;letter-spacing:0.048px;">Compute Engine</span>
<span id="t88" class="t" style="left:47.6px;top:882px;font-size:15px;color:#172b4d;letter-spacing:0.521px;">Network</span>
<span id="t89" class="t" style="left:47.6px;top:930px;font-size:15px;color:#172b4d;letter-spacing:-0.073px;">Auto Scaling</span>
<span id="t90" class="t" style="left:47.6px;top:978px;font-size:15px;color:#172b4d;letter-spacing:-0.028px;">Load Balancer</span>
<span id="t91" class="t" style="left:47.6px;top:1026px;font-size:15px;color:#172b4d;letter-spacing:0.090px;">Containers</span>
<span id="t92" class="t" style="left:47.6px;top:1074px;font-size:15px;color:#172b4d;letter-spacing:0.192px;">Database Platform</span>
<span id="t93" class="t" style="left:47.6px;top:1123px;font-size:15px;color:#172b4d;letter-spacing:-0.120px;">Cloud Storage</span>
<span id="t94" class="t" style="left:49.3px;top:153px;font-size:15px;color:#172b4d;letter-spacing:0.041px;">Bills</span>
<span id="t95" class="t" style="left:49.3px;top:201px;font-size:15px;color:#172b4d;letter-spacing:0.284px;">Budget Alert</span>
<span id="t96" class="t" style="left:49.3px;top:249px;font-size:15px;color:#fff;letter-spacing:0.066px;">Cost Explorer</span>
<span id="t97" class="t" style="left:49.3px;top:345px;font-size:15px;color:#172b4d;letter-spacing:-0.105px;">Users</span>
<span id="t98" class="t" style="left:49.3px;top:394px;font-size:15px;color:#172b4d;letter-spacing:0.190px;">User groups</span>
<span id="t99" class="t" style="left:49.3px;top:442px;font-size:15px;color:#172b4d;letter-spacing:-0.369px;">Roles</span>
<span id="t100" class="t" style="left:49.3px;top:490px;font-size:15px;color:#172b4d;letter-spacing:-0.340px;">IP Access</span>
<span id="t101" class="t" style="left:49.3px;top:538px;font-size:15px;color:#172b4d;letter-spacing:0.180px;">Policy Management</span>
<svg style="position:absolute;left:217.3px;top:107.8px" width="12" height="8.4" viewBox="0 0 12 8.4" fill="none" stroke="#172b4d" stroke-width="2" stroke-linecap="butt" stroke-linejoin="miter"><path d="M1.2 6.6 L6 1.8 L10.8 6.6"/></svg>
<svg style="position:absolute;left:217.3px;top:300.8px" width="12" height="8.4" viewBox="0 0 12 8.4" fill="none" stroke="#172b4d" stroke-width="2" stroke-linecap="butt" stroke-linejoin="miter"><path d="M1.2 6.6 L6 1.8 L10.8 6.6"/></svg>
<svg style="position:absolute;left:217.3px;top:836.8px" width="12" height="8.4" viewBox="0 0 12 8.4" fill="none" stroke="#172b4d" stroke-width="2" stroke-linecap="butt" stroke-linejoin="miter"><path d="M1.2 1.8 L6 6.6 L10.8 1.8"/></svg>
<svg style="position:absolute;left:217.3px;top:885.0px" width="12" height="8.4" viewBox="0 0 12 8.4" fill="none" stroke="#172b4d" stroke-width="2" stroke-linecap="butt" stroke-linejoin="miter"><path d="M1.2 1.8 L6 6.6 L10.8 1.8"/></svg>
<svg style="position:absolute;left:217.3px;top:933.1999999999999px" width="12" height="8.4" viewBox="0 0 12 8.4" fill="none" stroke="#172b4d" stroke-width="2" stroke-linecap="butt" stroke-linejoin="miter"><path d="M1.2 1.8 L6 6.6 L10.8 1.8"/></svg>
<svg style="position:absolute;left:217.3px;top:981.4px" width="12" height="8.4" viewBox="0 0 12 8.4" fill="none" stroke="#172b4d" stroke-width="2" stroke-linecap="butt" stroke-linejoin="miter"><path d="M1.2 1.8 L6 6.6 L10.8 1.8"/></svg>
<svg style="position:absolute;left:217.3px;top:1029.6px" width="12" height="8.4" viewBox="0 0 12 8.4" fill="none" stroke="#172b4d" stroke-width="2" stroke-linecap="butt" stroke-linejoin="miter"><path d="M1.2 1.8 L6 6.6 L10.8 1.8"/></svg>
<svg style="position:absolute;left:217.3px;top:1077.8px" width="12" height="8.4" viewBox="0 0 12 8.4" fill="none" stroke="#172b4d" stroke-width="2" stroke-linecap="butt" stroke-linejoin="miter"><path d="M1.2 1.8 L6 6.6 L10.8 1.8"/></svg>
<div style="position:absolute;left:7px;top:684px;width:235px;height:56px;border:1px solid #c4c4c4;border-radius:4px"></div>
<svg style="position:absolute;left:217px;top:709px" width="10" height="6"><path d="M0 0.5h10l-5 5z" fill="#666"/></svg>
<div style="position:absolute;left:7px;top:749px;width:235px;height:1px;background:#e3e5ec"></div>
<svg style="position:absolute;left:14px;top:102px" width="18" height="17" viewBox="0 0 18 17" fill="none" stroke="#0052cc" stroke-width="1.4" stroke-linecap="round" stroke-linejoin="round"><path d="M2.4 6.2V3.6a1.2 1.2 0 0 1 1.2-1.2h8.2a1.2 1.2 0 0 1 1.2 1.2v2.6M2.4 6.2h11.8a1.3 1.3 0 0 1 1.3 1.3v5.6a1.3 1.3 0 0 1-1.3 1.3H3.7a1.3 1.3 0 0 1-1.3-1.3z"/><circle cx="11.7" cy="9.8" r="0.6" fill="#0052cc"/></svg>
<svg style="position:absolute;left:15px;top:295px" width="19" height="18" viewBox="0 0 19 18" fill="none" stroke="#172b4d" stroke-width="1.4" stroke-linecap="round" stroke-linejoin="round"><path d="M3.8 2.3h11.4a1 1 0 0 1 1 0.8l1.2 7.2v4.5a1.2 1.2 0 0 1-1.2 1.2H2.8a1.2 1.2 0 0 1-1.2-1.2v-4.5l1.2-7.2a1 1 0 0 1 1-0.8zM1.8 10.6h15.4" /><path d="M7 8.6a1.5 1.5 0 0 1 0.6-2.9a2 2 0 0 1 3.6-0.3a1.7 1.7 0 0 1 0.6 3.2z" fill="#172b4d" stroke-width="0.6"/><circle cx="5" cy="13.3" r="0.5" fill="#172b4d" stroke-width="0.8"/></svg>
<svg style="position:absolute;left:15px;top:584.5px" width="19" height="20" viewBox="0 0 19 20" fill="none" stroke="#172b4d" stroke-width="1.5" stroke-linecap="round" stroke-linejoin="round"><path d="M2.8 3.6h5.9v14.2H2.8a1 1 0 0 1-1-1V4.6a1 1 0 0 1 1-1zM8.7 10.8h6.6a1 1 0 0 1 1 1v5a1 1 0 0 1-1 1H8.7M1.8 10.8h6.9"/><path d="M13.4 2.6l3.4 2.6v3.6a1 1 0 0 1-1 1h-4.8a1 1 0 0 1-1-1V5.2z" fill="#172b4d" stroke-width="0.8"/></svg>
<svg style="position:absolute;left:14px;top:632px" width="19" height="19" viewBox="0 0 19 19" fill="none" stroke="#172b4d" stroke-width="1.4" stroke-linecap="round" stroke-linejoin="round"><path d="M9.6 3.2l5.2-0.6a1 1 0 0 1 1.1 1.1l-0.6 5.6-7.4 7.2a1 1 0 0 1-1.4 0L2.2 12a1 1 0 0 1 0-1.4z"/><circle cx="12.2" cy="6.5" r="0.7" fill="#172b4d"/></svg>
<svg style="position:absolute;left:15px;top:785px" width="18" height="18" viewBox="0 0 18 18" fill="none" stroke="#172b4d" stroke-width="1.5" stroke-linecap="round" stroke-linejoin="round"><path d="M4.1 8.6v4.2M9.2 5.2v7.6M14 2v10.8" stroke-width="2" stroke-linecap="butt"/><path d="M1.6 15.6h15" stroke-width="1.3"/></svg>
<svg style="position:absolute;left:14px;top:831px" width="20" height="18" viewBox="0 0 20 18" fill="none" stroke="#172b4d" stroke-width="1.6" stroke-linecap="round" stroke-linejoin="round"><rect x="2.2" y="2.2" width="15.4" height="10.6" rx="1"/><path d="M9.9 12.8v3M6 15.9h8"/></svg>
<svg style="position:absolute;left:14px;top:879px" width="20" height="20" viewBox="0 0 20 20" fill="none" stroke="#172b4d" stroke-width="1.4" stroke-linecap="round" stroke-linejoin="round"><circle cx="10.4" cy="8.2" r="5.8"/><path d="M4.6 8.2h11.6M10.4 2.4c-3 3.4-3 8.2 0 11.6M10.4 2.4c3 3.4 3 8.2 0 11.6M10.4 14v1.2c0 1.4-1 2.4-2.4 2.4H2.2M10.4 15.2c0 1.4 1 2.4 2.4 2.4H18.4" stroke-width="1.3"/></svg>
<svg style="position:absolute;left:15px;top:927px" width="19" height="20" viewBox="0 0 19 20" fill="none" stroke="#172b4d" stroke-width="1.5" stroke-linecap="round" stroke-linejoin="round"><path d="M4.8 6V2.6h11.4v15H10"/><path d="M1.6 9.6h7v8.2h-7z" fill="#172b4d"/><path d="M8.4 6.2h4.2v11" stroke-width="1.3"/></svg>
<svg style="position:absolute;left:15px;top:976px" width="19" height="19" viewBox="0 0 19 19" fill="none" stroke="#172b4d" stroke-width="1.5" stroke-linecap="round" stroke-linejoin="round"><path d="M9.3 9.6V4.2M9.3 9.6l-4.6 2.8M9.3 9.6l4.6 2.8" stroke-width="1.3"/><circle cx="9.3" cy="3.2" r="1.6" stroke-width="1.3"/><circle cx="3.4" cy="6.2" r="1.6" stroke-width="1.3"/><circle cx="15.2" cy="6.2" r="1.6" stroke-width="1.3"/><circle cx="3.4" cy="12.6" r="1.6" stroke-width="1.3"/><circle cx="15.2" cy="12.6" r="1.6" stroke-width="1.3"/><circle cx="9.3" cy="15.6" r="1.6" stroke-width="1.3"/></svg>
<svg style="position:absolute;left:15px;top:1024px" width="19" height="19" viewBox="0 0 19 19" fill="none" stroke="#172b4d" stroke-width="1.5" stroke-linecap="round" stroke-linejoin="round"><path d="M9.6 2.2l7 3.2v8l-7 3.6-7-3.6v-8zM2.6 5.4l7 3.4 7-3.4M9.6 8.8v8.2M6 3.8l7 3.4" stroke-width="1.3"/><path d="M5 10.4v1.4M14 10.4v1.4" stroke-width="1.6"/></svg>
<svg style="position:absolute;left:15px;top:1072px" width="18" height="20" viewBox="0 0 18 20" fill="none" stroke="#172b4d" stroke-width="1.6" stroke-linecap="round" stroke-linejoin="round"><ellipse cx="9" cy="5" rx="6.6" ry="2.8"/><path d="M2.4 5v9.6c0 1.6 3 2.9 6.6 2.9s6.6-1.3 6.6-2.9V5M2.4 9.8c0 1.6 3 2.9 6.6 2.9s6.6-1.3 6.6-2.9"/></svg>
<svg style="position:absolute;left:15px;top:1120.5px" width="18" height="10" viewBox="0 0 18 10" fill="none" stroke="#172b4d" stroke-width="1.4" stroke-linecap="round" stroke-linejoin="round"><circle cx="4.5" cy="4" r="2.6"/><path d="M10.5 1.5h4.5a2 2 0 0 1 2 2V6"/></svg>
<div style="position:absolute;left:-23px;top:1002px;width:43px;height:43px;border-radius:50%;background:#000;box-shadow:0 0 0 1px #2a3a3c, 0 1px 1px 0.5px #2c6a70"></div>
<svg style="position:absolute;left:0;top:1008px" width="8" height="30"><path d="M-1 10.5L5.2 4.4M-1 19.6L5.2 25.8" stroke="#9a9a9a" stroke-width="1.8" fill="none"/></svg>
<div class="hdr"></div>
<div style="position:absolute;left:0;top:2px;width:62px;height:63px;background:#1259cf"></div>
<div style="position:absolute;left:21px;top:27px;width:19px;height:2px;background:#fff"></div>
<div style="position:absolute;left:21px;top:33px;width:19px;height:2px;background:#fff"></div>
<div style="position:absolute;left:21px;top:39px;width:19px;height:2px;background:#fff"></div>
<svg style="position:absolute;left:84px;top:14px" width="46" height="40" viewBox="0 0 46 40">
<g stroke="#fff" stroke-width="2.4" stroke-linecap="round"><line x1="22" y1="20" x2="8" y2="22.5"/><line x1="22" y1="20" x2="18.5" y2="8.5"/><line x1="22" y1="20" x2="37" y2="7"/><line x1="22" y1="20" x2="32" y2="31"/></g>
<g fill="#fff"><circle cx="22" cy="20.5" r="5"/><circle cx="7.5" cy="22.5" r="4.2"/><circle cx="18.5" cy="8.5" r="3.4"/><circle cx="37" cy="7" r="4.3"/><circle cx="32" cy="31.5" r="4.3"/></g></svg>
<span id="t102" class="t" style="left:129.3px;top:20px;font-size:30.5px;color:#fff;font-weight:700;transform:scaleX(0.9173);transform-origin:0 0;letter-spacing:-1.3px;word-spacing:-3px;-webkit-text-stroke:0.5px #fff;">FPT CLOUD</span>
<div style="position:absolute;left:305px;top:13.8px;width:210px;height:39.4px;border-radius:4px;background:#2668d3"></div>
<span id="t103" class="t" style="left:318.0px;top:25px;font-size:15px;color:#fff;letter-spacing:-0.562px;">Project: HAS EXTERN...</span>
<svg style="position:absolute;left:497px;top:31px" width="10" height="6"><path d="M0 0.5h10l-5 5z" fill="#fff"/></svg>
<div style="position:absolute;left:527px;top:13.8px;width:210px;height:39.4px;border-radius:4px;background:#2668d3"></div>
<span id="t104" class="t" style="left:540.2px;top:25px;font-size:15px;color:#fff;letter-spacing:-0.178px;">Region: Saigon (Vietn...</span>
<svg style="position:absolute;left:719px;top:31px" width="10" height="6"><path d="M0 0.5h10l-5 5z" fill="#fff"/></svg>
<svg style="position:absolute;left:1377.2px;top:20px" width="28" height="27" viewBox="0 0 28 27" fill="none" stroke="#fff" stroke-width="2" stroke-linecap="round">
<circle cx="11.7" cy="16" r="7.6"/><path d="M17 10.5 L24.5 3.2 M20.3 7.4 l2.6 2.6 M22.8 5 l2 2"/></svg>
<svg style="position:absolute;left:1438px;top:22px" width="26" height="23" viewBox="0 0 26 23" fill="none" stroke="#fff" stroke-width="1.7" stroke-linejoin="round" stroke-linecap="round">
<path d="M9.5 2.8a7 7 0 0 1 6.1 10.4l0.9 3.2-3.3-0.9A7 7 0 1 1 9.5 2.8z" transform="translate(20,0) scale(-1,1) translate(1,0)"/>
<path d="M17.8 8.2a6.2 6.2 0 0 1 4.4 9.3l0.8 3-3.1-0.8a6.2 6.2 0 0 1-8-1.8"/>
<path d="M8.6 7.6a2 2 0 1 1 2.9 1.8c-0.7 0.4-0.9 0.8-0.9 1.5M10.6 13.2v0.1" stroke-width="1.8"/></svg>
<svg style="position:absolute;left:1495px;top:22px" width="24" height="23" viewBox="0 0 24 23" fill="none" stroke="#fff" stroke-width="1.8" stroke-linejoin="round" stroke-linecap="round">
<path d="M4 3h6.2v17.5H4a1.2 1.2 0 0 1-1.2-1.2V4.2A1.2 1.2 0 0 1 4 3zM10.2 11.8h9.2a1.2 1.2 0 0 1 1.2 1.2v6.3a1.2 1.2 0 0 1-1.2 1.2h-9.2M2.8 11.8h7.4M16.6 2.6v6.2M13.5 5.7h6.2"/></svg>
<svg style="position:absolute;left:1551px;top:21px" width="23" height="25" viewBox="0 0 23 25" fill="none" stroke="#fff" stroke-width="1.7" stroke-linejoin="round" stroke-linecap="round">
<path d="M3.4 19.5V5a2 2 0 0 1 2-2h13.2v16.5M3.4 19.5a1.8 1.8 0 0 0 1.8 1.8H19M3.4 19.5a1.8 1.8 0 0 1 1.8-1.8H18.6M7.3 6.6h7.4v2H7.3z"/></svg>
<svg style="position:absolute;left:1608px;top:21px" width="24" height="25" viewBox="0 0 24 25" fill="none" stroke="#fff" stroke-width="1.9" stroke-linejoin="round" stroke-linecap="round">
<path d="M4.6 17.5V11a7.3 7.3 0 0 1 14.6 0v6.5M3 17.8h18M10.8 21h2.4"/></svg>
<div style="position:absolute;left:1655px;top:21px;width:2px;height:25px;background:#dfe8f8"></div>
<svg style="position:absolute;left:1914px;top:16px" width="35" height="35" viewBox="0 0 35 35"><circle cx="17.2" cy="17.4" r="17" fill="#f4f5f7"/><circle cx="17.2" cy="12" r="5.2" fill="#c1c1c1"/><path d="M9 21.4a1.4 1.4 0 0 1 1.4-1.4h13.6a1.4 1.4 0 0 1 1.4 1.4a8.2 6.3 0 0 1-16.4 0z" fill="#c1c1c1"/></svg>
<svg style="position:absolute;left:1955px;top:31px" width="11" height="6"><path d="M0 0.4h11l-5.5 5.4z" fill="#fff"/></svg>
</body></html>
